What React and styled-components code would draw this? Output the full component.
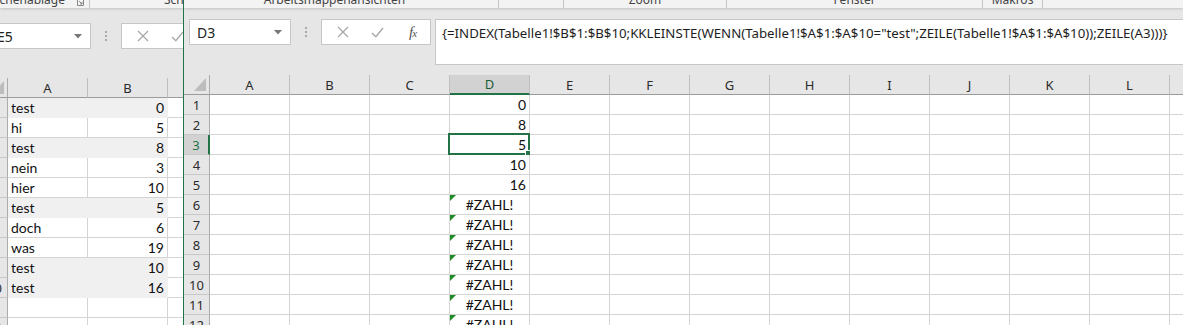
import React from "react";
import styled, { createGlobalStyle, css } from "styled-components";

const GlobalStyle = createGlobalStyle`
  *, *::before, *::after { box-sizing: border-box; }
  html, body { margin: 0; padding: 0; background: #e6e6e6; }
  body { font-family: "Noto Sans", sans-serif; }
`;

const GREEN = "#217346";
const GRID = "#d4d4d4";

const Screen = styled.div`
  width: 1183px;
  height: 325px;
  overflow: hidden;
  display: flex;
  background: #e6e6e6;
`;

const Window = styled.div`
  display: flex;
  flex-direction: column;
  overflow: hidden;
  background: #e6e6e6;
  ${(p) =>
    p.$front
      ? css`
          flex: 1;
          border-left: 1px solid ${GREEN};
        `
      : css`
          width: 183px;
          flex: none;
        `}
`;

/* bottom edge of the ribbon, labels cut off by the window above */
const RibbonStrip = styled.div`
  height: 8px;
  flex: none;
  display: flex;
  align-items: flex-end;
  overflow: hidden;
  background: #f3f3f3;
  box-shadow: 0 1px 3px rgba(0, 0, 0, 0.16);
  position: relative;
  z-index: 1;
`;

const RibbonGroup = styled.div`
  flex: none;
  width: ${(p) => p.$w}px;
  height: 16px;
  display: flex;
  align-items: center;
  justify-content: ${(p) => p.$justify || "center"};
  padding: 0 ${(p) => p.$padRight || 0}px 0 ${(p) => p.$padLeft || 0}px;
  font: 12px/16px "Noto Sans", sans-serif;
  color: #444;
  white-space: nowrap;
  border-right: ${(p) => (p.$sep ? "1px solid #c6c6c6" : "none")};
`;

const Launcher = styled.svg`
  flex: none;
  margin-left: 12px;
  margin-top: 4px;
`;

const FormulaBar = styled.div`
  flex: none;
  height: ${(p) => p.$h}px;
  display: flex;
  align-items: flex-start;
  padding: ${(p) => p.$top}px 0 0 5px;
`;

const NameBox = styled.div`
  flex: none;
  width: 102px;
  height: 26px;
  margin-left: ${(p) => p.$shift || 0}px;
  background: #fff;
  border: 1px solid #c6c6c6;
  display: flex;
  align-items: center;
  justify-content: space-between;
  padding: 0 8px 0 7px;
  font: 14px "Noto Sans", sans-serif;
  color: #222;
`;

const Grip = styled.div`
  flex: none;
  width: 30px;
  height: 26px;
  display: flex;
  flex-direction: column;
  align-items: center;
  justify-content: center;
  gap: 2px;

  span {
    width: 2px;
    height: 2px;
    background: #a9a9a9;
  }
`;

const ButtonBox = styled.div`
  flex: none;
  width: 110px;
  height: 26px;
  background: #fff;
  border: 1px solid #c6c6c6;
  display: flex;
  align-items: center;
  padding-left: 3px;
`;

const ButtonSlot = styled.div`
  width: 35px;
  height: 24px;
  display: flex;
  align-items: center;
  justify-content: center;
`;

const Fx = styled.span`
  font: italic 15px "Liberation Serif", serif;
  color: #555;
  letter-spacing: -1px;

  small {
    font-size: 11px;
  }
`;

const FormulaInput = styled.div`
  flex: none;
  width: 760px;
  height: 46px;
  margin-left: 4px;
  background: #fff;
  border: 1px solid #c6c6c6;
  padding: 4px 6px;
  font: 13.25px/18px "Noto Sans", sans-serif;
  color: #1e1e1e;
  white-space: nowrap;
`;

const Sheet = styled.div`
  flex: none;
  display: grid;
  grid-template-columns: 26px repeat(${(p) => p.$cols}, 80px);
  grid-auto-rows: 20px;
  margin-left: ${(p) => p.$shift || 0}px;
  background: #fff;
`;

const Corner = styled.div`
  background: #e6e6e6;
  border-right: 1px solid #ababab;
  border-bottom: 1px solid #9b9b9b;
  display: flex;
  align-items: flex-end;
  justify-content: flex-end;
  padding: 0 3px 3px 0;
`;

const ColHead = styled.div`
  background: ${(p) => (p.$sel ? "#d2d2d2" : "#e6e6e6")};
  border-right: 1px solid #bfbfbf;
  border-bottom: ${(p) => (p.$sel ? `2px solid ${GREEN}` : "1px solid #9b9b9b")};
  display: flex;
  align-items: center;
  justify-content: center;
  font: 13px "Noto Sans", sans-serif;
  color: ${(p) => (p.$sel ? "#1d5c39" : "#2b2b2b")};
`;

const RowHead = styled.div`
  background: ${(p) => (p.$sel ? "#d2d2d2" : "#e6e6e6")};
  border-right: ${(p) => (p.$sel ? `2px solid ${GREEN}` : "1px solid #ababab")};
  border-bottom: 1px solid #c8c8c8;
  display: flex;
  align-items: center;
  justify-content: center;
  font: 13px "Noto Sans", sans-serif;
  color: ${(p) => p.$color || (p.$sel ? GREEN : "#2b2b2b")};
`;

const Cell = styled.div`
  position: relative;
  background: ${(p) => (p.$fill ? "#f0f0f0" : "#fff")};
  border-right: 1px solid ${(p) => (p.$fill ? "#f0f0f0" : GRID)};
  border-bottom: 1px solid ${(p) => (p.$fill ? "#f0f0f0" : GRID)};
  display: flex;
  align-items: center;
  justify-content: ${(p) =>
    p.$align === "right" ? "flex-end" : p.$align === "center" ? "center" : "flex-start"};
  padding: 0 3px;
  font: 14px/19px Lato, sans-serif;
  color: #111;
  white-space: nowrap;

  ${(p) =>
    p.$flag &&
    css`
      &::before {
        content: "";
        position: absolute;
        top: 0;
        left: 0;
        border-top: 6px solid #1f8b24;
        border-right: 6px solid transparent;
      }
    `}
`;

const ActiveFrame = styled.div`
  position: absolute;
  top: -2px;
  left: -2px;
  right: -1px;
  bottom: -1px;
  border: 2px solid ${GREEN};
  pointer-events: none;
`;

const FillHandle = styled.div`
  position: absolute;
  right: -4px;
  bottom: -4px;
  width: 7px;
  height: 7px;
  background: ${GREEN};
  border: 1px solid #fff;
`;

function DropArrow() {
  return (
    <svg width="8" height="5" viewBox="0 0 8 5">
      <path d="M0 0h8L4 4.5z" fill="#777" />
    </svg>
  );
}

function FormulaButtons() {
  return (
    <ButtonBox>
      <ButtonSlot>
        <svg width="12" height="12" viewBox="0 0 12 12">
          <path d="M1 1l10 10M11 1L1 11" stroke="#a8a8a8" strokeWidth="1.3" fill="none" />
        </svg>
      </ButtonSlot>
      <ButtonSlot>
        <svg width="13" height="11" viewBox="0 0 13 11">
          <path d="M1 6l3.8 3.8L12 1" stroke="#a8a8a8" strokeWidth="1.4" fill="none" />
        </svg>
      </ButtonSlot>
      <ButtonSlot>
        <Fx>
          f<small>x</small>
        </Fx>
      </ButtonSlot>
    </ButtonBox>
  );
}

function CornerMark() {
  return (
    <svg width="12" height="13" viewBox="0 0 12 13">
      <path d="M12 0v13H0z" fill="#bdbdbd" />
    </svg>
  );
}

const leftData = [
  ["test", "0", true],
  ["hi", "5", false],
  ["test", "8", true],
  ["nein", "3", false],
  ["hier", "10", false],
  ["test", "5", true],
  ["doch", "6", false],
  ["was", "19", false],
  ["test", "10", true],
  ["test", "16", true],
  ["", "", false],
  ["", "", false],
];

const frontCols = ["A", "B", "C", "D", "E", "F", "G", "H", "I", "J", "K", "L", "M"];
const frontD = ["0", "8", "5", "10", "16", "#ZAHL!", "#ZAHL!", "#ZAHL!", "#ZAHL!", "#ZAHL!", "#ZAHL!", "#ZAHL!"];

const formula =
  '{=INDEX(Tabelle1!$B$1:$B$10;KKLEINSTE(WENN(Tabelle1!$A$1:$A$10="test";ZEILE(Tabelle1!$A$1:$A$10));ZEILE(A3)))}';

function BackWindow() {
  return (
    <Window>
      <RibbonStrip>
        <RibbonGroup $w={90} $sep $justify="flex-end" $padRight={5}>
          Zwischenablage
          <Launcher width="7" height="7" viewBox="0 0 7 7">
            <path d="M0.5 6.5V0.5h6v6z" fill="none" stroke="#888" />
            <path d="M2 2l3 3M5 3v2H3" fill="none" stroke="#888" />
          </Launcher>
        </RibbonGroup>
        <RibbonGroup $w={200} $justify="flex-start" $padLeft={74}>
          Schriftart
        </RibbonGroup>
      </RibbonStrip>

      <FormulaBar $h={70} $top={15}>
        <NameBox $shift={-16}>
          E5
          <DropArrow />
        </NameBox>
        <Grip>
          <span />
          <span />
          <span />
        </Grip>
        <FormulaButtons />
        <FormulaInput />
      </FormulaBar>

      <Sheet $cols={3} $shift={-18}>
        <Corner>
          <CornerMark />
        </Corner>
        {["A", "B", "C"].map((c) => (
          <ColHead key={c}>{c}</ColHead>
        ))}
        {leftData.map(([a, b, fill], i) => (
          <React.Fragment key={i}>
            <RowHead $color={i === 10 ? "#2b6cc4" : undefined}>{i + 1}</RowHead>
            <Cell $fill={fill}>{a}</Cell>
            <Cell $fill={fill} $align="right">
              {b}
            </Cell>
            <Cell />
          </React.Fragment>
        ))}
      </Sheet>
    </Window>
  );
}

function FrontWindow() {
  return (
    <Window $front>
      <RibbonStrip>
        <RibbonGroup $w={315} $sep $padRight={13}>
          Arbeitsmappenansichten
        </RibbonGroup>
        <RibbonGroup $w={65} $sep />
        <RibbonGroup $w={163} $sep>
          Zoom
        </RibbonGroup>
        <RibbonGroup $w={256} $sep>
          Fenster
        </RibbonGroup>
        <RibbonGroup $w={60} $sep>
          Makros
        </RibbonGroup>
      </RibbonStrip>

      <FormulaBar $h={67} $top={11}>
        <NameBox>
          D3
          <DropArrow />
        </NameBox>
        <Grip>
          <span />
          <span />
          <span />
        </Grip>
        <FormulaButtons />
        <FormulaInput>{formula}</FormulaInput>
      </FormulaBar>

      <Sheet $cols={frontCols.length}>
        <Corner>
          <CornerMark />
        </Corner>
        {frontCols.map((c) => (
          <ColHead key={c} $sel={c === "D"}>
            {c}
          </ColHead>
        ))}
        {frontD.map((v, i) => {
          const isError = v.startsWith("#");
          return (
            <React.Fragment key={i}>
              <RowHead $sel={i === 2}>{i + 1}</RowHead>
              {frontCols.map((c) =>
                c === "D" ? (
                  <Cell key={c} $align={isError ? "center" : "right"} $flag={isError}>
                    {v}
                    {i === 2 && (
                      <ActiveFrame>
                        <FillHandle />
                      </ActiveFrame>
                    )}
                  </Cell>
                ) : (
                  <Cell key={c} />
                )
              )}
            </React.Fragment>
          );
        })}
      </Sheet>
    </Window>
  );
}

export default function App() {
  return (
    <>
      <GlobalStyle />
      <Screen>
        <BackWindow />
        <FrontWindow />
      </Screen>
    </>
  );
}
